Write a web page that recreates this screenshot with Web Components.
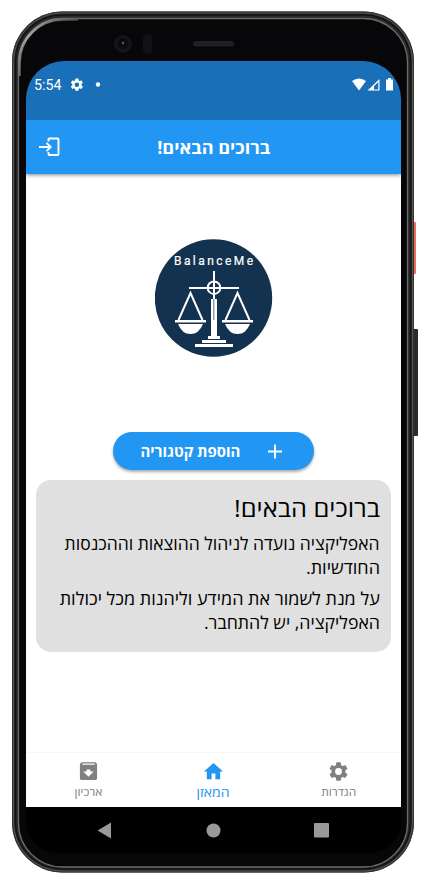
<!DOCTYPE html>
<html lang="he"><head><meta charset="utf-8"><title>BalanceMe</title>
<style>html,body{margin:0;background:#fff;overflow:hidden}body{font-family:"Open Sans","Noto Sans","DejaVu Sans",sans-serif}</style></head>
<body>
<phone-frame>
  <status-bar></status-bar>
  <app-header><fit-text w="113">ברוכים הבאים!</fit-text></app-header>
  <main-view>
    <balance-logo></balance-logo>
    <add-button><fit-text w="100">הוספת קטגוריה</fit-text></add-button>
    <welcome-card>
      <fit-text slot="title" w="146">ברוכים הבאים!</fit-text>
      <fit-text w="315">האפליקציה נועדה לניהול ההוצאות וההכנסות</fit-text>
      <fit-text w="74">החודשיות.</fit-text>
      <fit-text class="gap" w="320">על מנת לשמור את המידע וליהנות מכל יכולות</fit-text>
      <fit-text w="176">האפליקציה, יש להתחבר.</fit-text>
    </welcome-card>
  </main-view>
  <tab-bar>
    <tab-item icon="archive"><fit-text w="28">ארכיון</fit-text></tab-item>
    <tab-item icon="home" active><fit-text w="33">המאזן</fit-text></tab-item>
    <tab-item icon="gear"><fit-text w="35">הגדרות</fit-text></tab-item>
  </tab-bar>
  <system-nav></system-nav>
</phone-frame>
<script>
const GEAR='M19.14 12.94c.04-.3.06-.61.06-.94s-.02-.64-.07-.94l2.03-1.58a.49.49 0 0 0 .12-.61l-1.92-3.32a.49.49 0 0 0-.59-.22l-2.39.96c-.5-.38-1.03-.7-1.62-.94l-.36-2.54A.48.48 0 0 0 13.92 2.4h-3.84a.48.48 0 0 0-.47.41l-.36 2.54c-.59.24-1.13.57-1.62.94l-2.39-.96a.48.48 0 0 0-.59.22L2.74 8.87c-.12.21-.08.47.12.61l2.03 1.58c-.05.3-.09.63-.09.94s.02.64.07.94l-2.03 1.58a.49.49 0 0 0-.12.61l1.92 3.32c.12.22.37.29.59.22l2.39-.96c.5.38 1.03.7 1.62.94l.36 2.54c.05.24.24.41.48.41h3.84c.24 0 .44-.17.47-.41l.36-2.54c.59-.24 1.13-.56 1.62-.94l2.39.96c.22.08.47 0 .59-.22l1.92-3.32a.49.49 0 0 0-.12-.61zM12 15.6A3.6 3.6 0 1 1 12 8.4a3.6 3.6 0 0 1 0 7.2z';
const ICONS={gear:GEAR,home:'M10 20v-6h4v6h5v-8h3L12 3 2 12h3v8z',
archive:'M18 2.300H6C4.300 2.300 3 3.300 3 5V19c0 1.100.9 2 2 2h14c1.100 0 2-.9 2-2V5C21 3.300 19.700 2.300 18 2.300zM6 3.500H18L19 5H5zM12 17.500L6.500 12H10v-2h4v2h3.500z'};
function define(name,html,setup){
  customElements.define(name,class extends HTMLElement{
    constructor(){super();this.attachShadow({mode:'open'}).innerHTML=html;}
    connectedCallback(){if(setup)setup(this,this.shadowRoot);}
  });
}
define('phone-frame',`<style>
:host{display:block;position:relative;isolation:isolate;box-sizing:border-box;width:421px;height:883px;padding:61px 20px 0 26px}
svg{position:absolute;inset:0;z-index:-1}
.screen{display:flex;flex-direction:column;width:375px;height:792px;border-radius:38px 38px 32px 32px;overflow:hidden;background:#000}
</style>
<svg width="421" height="883" fill="none">
<defs><linearGradient id="shine" x1="18" y1="80" x2="80" y2="18" gradientUnits="userSpaceOnUse"><stop stop-color="#777"/><stop offset=".45" stop-color="#c4c4c4"/><stop offset="1" stop-color="#555"/></linearGradient></defs>
<rect x="412" y="222" width="4" height="52" rx="1" fill="#ee6d55"/><rect x="412" y="329" width="6" height="107" rx="1" fill="#2b2b2b"/>
<rect x="12" y="11.500" width="402" height="861" rx="50" fill="#2a2a2a"/>
<rect x="12.500" y="12" width="401" height="860" rx="49.500" stroke="#333"/>
<rect x="13.500" y="13" width="399" height="858" rx="48.500" stroke="#555653"/>
<rect x="15.500" y="15" width="395" height="854" rx="47" stroke="#131313" stroke-width="1.500"/>
<rect x="18.500" y="18.500" width="389" height="848.500" rx="44" fill="#070608" stroke="#6a6a69" stroke-width="1.300"/>
<path d="M19.500 76V63A43.500 43.500 0 0 1 63 19.500H78" stroke="url(#shine)" stroke-width="2.500" opacity=".8"/>
<circle cx="123" cy="44" r="9" fill="#151418"/><circle cx="123" cy="43.500" r="5.500" fill="#0c0b10"/><circle cx="123" cy="43" r="1.200" fill="#555c68"/>
<rect x="143" y="34" width="9" height="20" rx="4" fill="#111014"/><rect x="193" y="41" width="41" height="5.500" rx="2.700" fill="#212123"/>
</svg><div class="screen"><slot></slot></div>`);
define('status-bar',`<style>
:host{display:flex;box-sizing:border-box;flex:none;height:59px;background:#1a70b8;color:#fff;padding:14px 7px 0 8px;position:relative;z-index:2}
svg{display:block;flex:none}
span{font:14.200px/20px Roboto,sans-serif;width:36px;white-space:nowrap}
.sp{flex:1}</style>
<span>5:54</span><svg width="50" height="20" fill="#fff"><g transform="translate(-.8 2) scale(.64)"><path d="${GEAR}"/></g><circle cx="28" cy="9.500" r="2.200"/></svg><div class="sp"></div>
<svg width="43" height="20" fill="#fff"><path d="M1 6Q8 1 15 6L8 15.500Z"/><path d="M28.500 4V15.500H16.500Z"/><path d="M27.300 7V14.400H23V11.300Z" fill="#1a70b8"/><path d="M35 4.500h2V3h3V4.500h2v11h-7z"/></svg>`);
define('app-header',`<style>
:host{display:grid;grid-template-columns:62px 1fr 61px;align-items:center;flex:none;height:54px;background:#2196f3;color:#fff;font-size:17px;font-weight:700;box-shadow:0 1px 4px #0007;z-index:1}
svg{margin-left:12px}.t{justify-self:center;display:flex}</style>
<svg width="23" height="20" viewBox="0 0 23 20" fill="none" stroke="#fff" stroke-width="1.900"><path d="M1 10H12M8.500 5.800L12.700 10L8.500 14.200M10.500 4.500V2.500Q10.500 1.500 11.500 1.500H19.500Q20.500 1.500 20.500 2.500V17Q20.500 18 19.500 18H11.500Q10.500 18 10.500 17V15"/></svg><div class="t"><slot></slot></div><i></i>`);
define('main-view',`<style>:host{display:flex;flex:1;flex-direction:column;align-items:center;padding:65px 10px 0;background:#fff}</style><slot></slot>`);
define('balance-logo',`<style>:host{display:block;width:118px;height:118px}svg{display:block}</style>
<svg width="118" height="118" viewBox="155 239 118 118"><circle cx="213.500" cy="298" r="58.700" fill="#13324f"/>
<text x="174" y="265" textLength="79" font-family="Roboto,sans-serif" font-size="12" fill="#fff" stroke="#fff" stroke-width=".2">BalanceMe</text>
<g fill="none" stroke="#fff" stroke-width="2"><path d="M189 288H239M214 271V299"/><circle cx="214" cy="287.700" r="6.300"/><path d="M178.500 320L190.500 293L202.500 320M225.500 320L237.500 293L249.500 320"/></g>
<g fill="#fff"><path d="M175 320h31v2.500H175zM222 320h31v2.500H222zM178 324h25Q199 334 190.500 334Q182 334 178 324zM225 324h25Q246 334 237.500 334Q229 334 225 324zM211 299h6v37h-6zM208 336h12v3h-12zM202 340h24v3H202zM195 344h38v3H195z"/></g><path d="M213.800 299V320" stroke="#607487"/></svg>`);
define('add-button',`<style>
:host{display:flex;flex:none;box-sizing:border-box;align-items:center;width:201px;height:38px;margin-top:75px;padding:0 30px 0 27px;border-radius:20px;background:#2196f3;box-shadow:0 2px 3px #0005;color:#fff;font-size:15px;font-weight:700;justify-content:space-between}svg{display:block;margin-right:1px}</style>
<slot></slot><svg width="15" height="15" fill="none" stroke="#fff" stroke-width="1.900"><path d="M0 7.500H14M7 .5V14.500"/></svg>`);
define('welcome-card',`<style>
:host{display:flex;flex-direction:column;align-items:flex-end;box-sizing:border-box;width:355px;height:172px;margin:10px 0 0;padding:9px 11px 0;border-radius:15px;background:#e0e0e0;color:#000;font-size:17.500px;line-height:23.500px}
.h{display:flex;font-size:24px;line-height:38px;margin-bottom:5px}::slotted(.gap){margin-top:8px}</style>
<div class="h"><slot name="title"></slot></div><slot></slot>`);
define('tab-bar',`<style>:host{display:grid;grid-template-columns:repeat(3,1fr);flex:none;box-sizing:border-box;height:55px;border-top:1px solid #f7f7f7;background:#fff}</style><slot></slot>`);
define('tab-item',`<style>
:host{display:flex;flex-direction:column;align-items:center;padding-top:8px;color:#808080;font-size:11px;line-height:18px}
:host([active]){color:#2196f3;font-size:13px}svg{display:block;margin-bottom:1px}</style>
<svg width="21" height="21" viewBox="1 1 22 22" fill="currentColor" fill-rule="evenodd"><path/></svg><slot></slot>`,
(el,r)=>r.querySelector('path').setAttribute('d',ICONS[el.getAttribute('icon')]));
define('system-nav',`<style>:host{display:block;flex:none;height:46px;background:#000}svg{display:block}</style>
<svg width="375" height="46" viewBox="0 0 375 46" fill="#999"><path d="M71.500 23.500L85 15.500V31.500Z"/><circle cx="187.500" cy="23.500" r="7"/><rect x="288" y="16" width="15" height="14.500" rx="1"/></svg>`);
define('fit-text',`<style>:host{display:block;flex:none;white-space:nowrap;direction:rtl}span{display:inline-block;transform-origin:right center}</style><span><slot></slot></span>`,
(el,r)=>{const w=+el.getAttribute('w'),s=r.querySelector('span');el.style.width=w+'px';s.style.transform='scaleX('+w/s.getBoundingClientRect().width+')';});
</script></body></html>
